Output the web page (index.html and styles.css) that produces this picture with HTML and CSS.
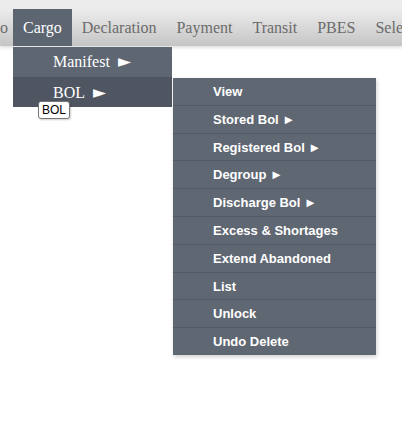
FILE: index.html
```html
<!DOCTYPE html>
<html>
<head>
<meta charset="utf-8">
<link rel="stylesheet" href="styles.css">
</head>
<body>
<div class="topstrip"></div>
<nav class="navbar">
  <ul class="nav">
    <li class="nav-item clipped">o</li>
    <li class="nav-item active">Cargo
      <ul class="sub">
        <li class="sub-item">Manifest&nbsp;&nbsp;<span class="arr">►</span></li>
        <li class="sub-item hover">BOL&nbsp;&nbsp;<span class="arr">►</span>
          <ul class="sub2">
            <li class="sub2-item">View</li>
            <li class="sub2-item">Stored Bol ►</li>
            <li class="sub2-item">Registered Bol ►</li>
            <li class="sub2-item">Degroup ►</li>
            <li class="sub2-item">Discharge Bol ►</li>
            <li class="sub2-item">Excess &amp; Shortages</li>
            <li class="sub2-item">Extend Abandoned</li>
            <li class="sub2-item">List</li>
            <li class="sub2-item">Unlock</li>
            <li class="sub2-item">Undo Delete</li>
          </ul>
        </li>
      </ul>
      <span class="tooltip">BOL</span>
    </li>
    <li class="nav-item">Declaration</li>
    <li class="nav-item">Payment</li>
    <li class="nav-item">Transit</li>
    <li class="nav-item">PBES</li>
    <li class="nav-item">Selectivity</li>
  </ul>
</nav>
</body>
</html>
```
FILE: styles.css
```css
html, body {
  margin: 0;
  padding: 0;
  background: #ffffff;
  width: 402px;
  height: 441px;
  overflow: hidden;
}
.topstrip {
  height: 9px;
  background: #ececec;
}
.navbar {
  height: 37px;
  background: linear-gradient(#ececec, #c5c5c5);
  box-shadow: 0 2px 3px rgba(0,0,0,0.12);
  position: relative;
  z-index: 1;
}
.nav {
  list-style: none;
  margin: 0;
  padding: 0;
  display: flex;
  white-space: nowrap;
  font-family: "Liberation Serif", "Times New Roman", serif;
  font-size: 16px;
  height: 37px;
}
.nav-item {
  position: relative;
  padding: 0 10px;
  line-height: 37px;
  color: #6b6b6b;
}
.nav-item.clipped {
  margin-left: -10px;
  padding: 0 5px 0 10px;
}
.nav-item.active {
  background: #5c6570;
  color: #ffffff;
}
.sub {
  list-style: none;
  margin: 0;
  padding: 0;
  position: absolute;
  left: 0;
  top: 38px;
  width: 159px;
  background: #5e6672;
}
.sub-item {
  position: relative;
  height: 30px;
  line-height: 29px;
  padding-left: 40px;
  color: #ffffff;
  border-bottom: 1px solid #4d545e;
}
.sub-item:last-child {
  border-bottom: none;
  height: 29px;
}
.sub-item.hover {
  background: #4f5661;
}
.arr {
  font-family: "DejaVu Sans", sans-serif;
  font-size: 17px;
  vertical-align: top;
}
.sub2 {
  list-style: none;
  margin: 0;
  padding: 0;
  position: absolute;
  left: 160px;
  top: 0;
  width: 203px;
  background: #5f6773;
  box-shadow: 1px 2px 4px rgba(0,0,0,0.18);
  font-family: "Liberation Sans", Arial, sans-serif;
  font-weight: bold;
  font-size: 13px;
}
.sub2-item {
  height: 26.8px;
  line-height: 28px;
  padding-left: 40px;
  color: #ffffff;
  border-bottom: 1px solid #525964;
}
.sub2-item:last-child {
  border-bottom: none;
}
.tooltip {
  position: absolute;
  left: 25px;
  top: 92px;
  height: 16px;
  line-height: 16px;
  padding: 0 3px;
  background: #ffffff;
  border: 1px solid #767676;
  border-radius: 3px;
  box-shadow: 1px 1px 2px rgba(0,0,0,0.2);
  color: #000000;
  font-family: "Liberation Sans", Arial, sans-serif;
  font-size: 12px;
  z-index: 5;
}
```
